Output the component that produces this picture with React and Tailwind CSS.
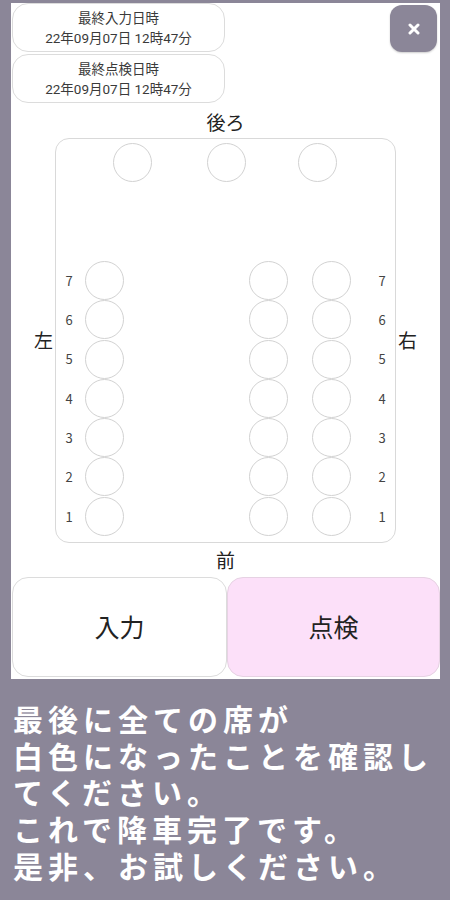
import React from "react";

const jp = { fontFamily: '"Noto Sans CJK JP", "Noto Sans", sans-serif' };
const card = { fontFamily: 'Roboto, "Noto Sans CJK JP", sans-serif' };

const Seat = () => (
    <div className="w-[39px] h-[39px] rounded-full border border-[#d2d2d2] bg-white" />
);

const InfoCard = ({ title, value }) => (
    <div
        className="w-[213px] h-[49px] rounded-[16px] border border-[#dcdcdc] flex flex-col items-center justify-center text-[#3a3a3a] leading-[20px]"
        style={card}
    >
        <div className="text-[13.5px]">{title}</div>
        <div className="text-[13.5px]">{value}</div>
    </div>
);

const rows = [7, 6, 5, 4, 3, 2, 1];

export default function App() {
    return (
        <div className="w-[450px] h-[900px] bg-[#8b8698] pt-[3px] pl-[11px]" style={jp}>
            <div className="w-[429px] h-[676px] bg-white flex flex-col">
                {/* header: dates + close */}
                <div className="flex justify-between pl-[1px] pr-[3px]">
                    <div className="flex flex-col gap-[2px]">
                        <InfoCard title="最終入力日時" value="22年09月07日 12時47分" />
                        <InfoCard title="最終点検日時" value="22年09月07日 12時47分" />
                    </div>
                    <button className="mt-[2px] w-[47px] h-[47px] rounded-[12px] bg-[#8b8698] shadow-[0_1px_2px_rgba(0,0,0,0.2)] flex items-center justify-center">
                        <svg width="12" height="12" viewBox="0 0 12 12">
                            <path d="M2 2 L10 10 M10 2 L2 10" stroke="white" strokeWidth="3" strokeLinecap="round" />
                        </svg>
                    </button>
                </div>

                <div className="h-[35px] flex items-center justify-center text-[19px] text-[#222] pt-[4px]">後ろ</div>

                {/* seat map */}
                <div className="flex items-center">
                    <div className="w-[44px] flex justify-end pr-[2px] text-[19px] text-[#222]">左</div>
                    <div className="w-[341px] h-[405px] rounded-[14px] border border-[#d9d9d9] flex flex-col">
                        <div className="flex pt-[4px]">
                            <div className="ml-[57px]"><Seat /></div>
                            <div className="ml-[55px]"><Seat /></div>
                            <div className="ml-[52px]"><Seat /></div>
                        </div>
                        <div className="flex flex-col gap-[0.3px] mt-[79px]">
                            {rows.map((n) => (
                                <div key={n} className="flex items-center">
                                    <span className="w-[26px] text-center text-[13px] text-[#444]">{n}</span>
                                    <div className="ml-[3px]"><Seat /></div>
                                    <div className="ml-[125px]"><Seat /></div>
                                    <div className="ml-[24px]"><Seat /></div>
                                    <span className="ml-[18px] w-[26px] text-center text-[13px] text-[#444]">{n}</span>
                                </div>
                            ))}
                        </div>
                    </div>
                    <div className="w-[44px] flex justify-start pl-[2px] text-[19px] text-[#222]">右</div>
                </div>

                <div className="h-[34px] flex items-center justify-center text-[19px] text-[#222]">前</div>

                {/* buttons */}
                <div className="flex pl-[1px] h-[100px]">
                    <button className="w-[215px] h-full rounded-[16px] border border-[#dcdcdc] bg-white text-[25px] text-[#222]">入力</button>
                    <button className="w-[213px] h-full rounded-[16px] border border-[#e6d2e3] bg-[#fce0f9] text-[25px] text-[#222]">点検</button>
                </div>
            </div>

            <div className="mt-[21px] pl-[2px] text-white font-bold text-[30px] leading-[36.7px] tracking-[5px]">
                <div>最後に全ての席が</div>
                <div>白色になったことを確認し</div>
                <div>てください。</div>
                <div>これで降車完了です。</div>
                <div>是非、お試しください。</div>
            </div>
        </div>
    );
}
